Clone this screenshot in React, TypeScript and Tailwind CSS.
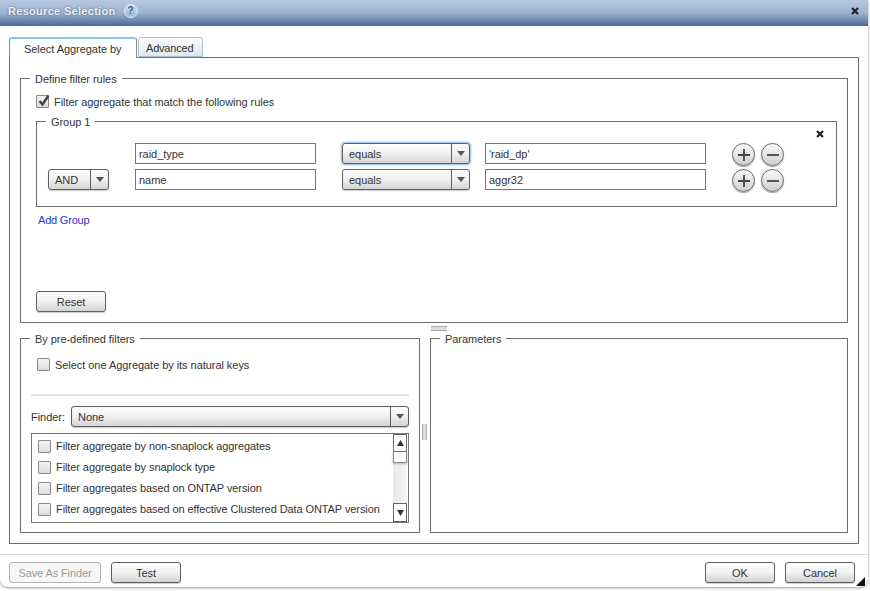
import React from "react"

const btnClass =
  "flex h-[21px] w-[70px] items-center justify-center rounded-[3px] border border-[#5f5f5f] bg-gradient-to-b from-[#fdfdfd] via-[#f2f2f2] to-[#d2d2d2] pt-[1px] text-[#333] shadow-[0_1px_1px_#ccc]"

function Checkbox({ checked = false }: { checked?: boolean }) {
  return (
    <span className="relative block h-[13px] w-[13px] shrink-0 rounded-[1px] border border-[#8a8a8a] bg-gradient-to-b from-[#f4f4f4] to-[#dcdcdc]">
      {checked && (
        <svg className="absolute left-[0px] top-[-3px]" width="14" height="15" viewBox="0 0 14 15">
          <path d="M2.5 8 L5.5 11.5 L11.5 2.5" fill="none" stroke="#444" strokeWidth="2.4" />
        </svg>
      )}
    </span>
  )
}

function Arrow() {
  return (
    <svg width="8" height="5" viewBox="0 0 8 5">
      <path d="M0 0 H8 L4 5 Z" fill="#555" />
    </svg>
  )
}

function CloseIcon() {
  return (
    <svg width="8" height="8" viewBox="0 0 8 8">
      <path d="M1 1 L7 7 M7 1 L1 7" stroke="#222" strokeWidth="2.2" />
    </svg>
  )
}

function Select({ label, width, focus = false }: { label: string; width: string; focus?: boolean }) {
  return (
    <div
      className={`flex h-[21px] shrink-0 items-center rounded-[3px] border border-[#5f5f5f] bg-gradient-to-b from-[#fdfdfd] via-[#f0f0f0] to-[#d4d4d4] text-[#333] ${width} ${
        focus ? "shadow-[0_0_2px_1px_#8db8e8]" : "shadow-[0_1px_1px_#ccc]"
      }`}
    >
      <span className="flex-1 pl-[6px] pt-[1px]">{label}</span>
      <span className="flex h-full w-[18px] items-center justify-center border-l border-[#5f5f5f]">
        <Arrow />
      </span>
    </div>
  )
}

function TextInput({ value, width }: { value: string; width: string }) {
  return (
    <div className={`flex h-[21px] shrink-0 items-center border border-[#777] bg-white pl-[3px] pt-[1px] text-[#333] ${width}`}>
      {value}
    </div>
  )
}

function RoundButton({ kind }: { kind: "plus" | "minus" }) {
  return (
    <span className="flex h-[23px] w-[23px] shrink-0 items-center justify-center rounded-full border border-[#666] bg-gradient-to-b from-[#fafafa] to-[#cfcfcf] shadow-[0_1px_1px_#aaa]">
      <svg width="12" height="12" viewBox="0 0 12 12">
        <path d={kind === "plus" ? "M0 6 H12 M6 0 V12" : "M0 6 H12"} stroke="#444" strokeWidth="1.8" />
      </svg>
    </span>
  )
}

function RuleRow({ field, value, first }: { field: string; value: string; first?: boolean }) {
  return (
    <div className="flex h-[20px] items-start pl-[11px]">
      <div className="w-[61px] shrink-0">
        {!first && <Select label="AND" width="w-[61px]" />}
      </div>
      <div className="ml-[26px]">
        <TextInput value={field} width="w-[181px]" />
      </div>
      <div className="ml-[26px]">
        <Select label="equals" width="w-[128px]" focus={first} />
      </div>
      <div className="ml-[15px]">
        <TextInput value={value} width="w-[221px]" />
      </div>
      <div className="ml-[26px] flex gap-[6px]">
        <RoundButton kind="plus" />
        <RoundButton kind="minus" />
      </div>
    </div>
  )
}

const filters = [
  "Filter aggregate by non-snaplock aggregates",
  "Filter aggregate by snaplock type",
  "Filter aggregates based on ONTAP version",
  "Filter aggregates based on effective Clustered Data ONTAP version",
]

function FilterList() {
  return (
    <div className="ml-[10px] mt-[6px] flex h-[90px] w-[378px] border border-[#777] bg-white">
      <div className="flex-1 pl-[6px] pt-[2px]">
        {filters.map((f) => (
          <div key={f} className="flex h-[21px] items-center gap-[5px]">
            <Checkbox />
            <span className="tracking-[-0.09px] text-[#333]">{f}</span>
          </div>
        ))}
      </div>
      <div className="mr-[1px] flex w-[14px] flex-col bg-gradient-to-r from-[#e8e8e8] to-[#f6f6f6]">
        <span className="flex h-[18px] items-center justify-center border border-[#666] bg-white">
          <svg width="7" height="6" viewBox="0 0 7 6"><path d="M3.5 0 L7 6 H0 Z" fill="#333" /></svg>
        </span>
        <span className="h-[11px] border-x border-b border-[#888] bg-white shadow-[0_1px_2px_#bbb]" />
        <span className="flex-1" />
        <span className="flex h-[19px] items-center justify-center border border-[#666] bg-white">
          <svg width="7" height="6" viewBox="0 0 7 6"><path d="M3.5 6 L7 0 H0 Z" fill="#333" /></svg>
        </span>
      </div>
    </div>
  )
}

function Legend({ text }: { text: string }) {
  return <legend className="ml-[9px] h-[14px] px-[5px] pt-[1px] leading-[14px] text-[#333]">{text}</legend>
}

export default function App() {
  return (
    <div className="h-[591px] w-[870px] overflow-hidden bg-white font-['Liberation_Sans',Arial,sans-serif] text-[11px] tracking-[-0.05px]">
      <div className="relative flex h-[587px] w-[868px] flex-col rounded-b-[8px] bg-white shadow-[0_1px_3px_#999]">
        {/* title bar */}
        <div className="flex h-[26px] shrink-0 items-center bg-gradient-to-b from-[#b8cae1] via-[#9db2cf] to-[#4d6b96] pb-[4px] pl-[8px] pr-[9px]">
          <span className="font-bold tracking-[0.3px] text-[#eef1f6] [text-shadow:0_0_2px_#3c5070]">Resource Selection</span>
          <span className="ml-[8px] flex h-[14px] w-[14px] items-center justify-center rounded-full border border-[#dfe9f4] bg-gradient-to-b from-[#cfe3f5] to-[#8fb8dc] text-[10px] font-bold leading-none text-[#3c5a86]">
            ?
          </span>
          <span className="ml-auto">
            <CloseIcon />
          </span>
        </div>

        {/* tabs */}
        <div className="relative z-10 ml-[9px] mt-[11px] flex h-[21px] shrink-0">
          <div className="flex h-[21px] w-[128px] items-center rounded-t-[3px] border-x border-t-2 border-[#888] border-t-[#8fc4ea] bg-white pl-[14px] pt-[1px] text-[#333]">
            Select Aggregate by
          </div>
          <div className="ml-[1px] flex h-[20px] w-[65px] items-center rounded-t-[3px] border border-[#a9c0cf] bg-gradient-to-b from-[#fdfdfd] to-[#dfe8ee] pl-[7px] pt-[2px] tracking-[-0.2px] text-[#333]">
            Advanced
          </div>
        </div>

        {/* tab panel */}
        <div className="-mt-px ml-[9px] h-[487px] w-[850px] shrink-0 border border-[#6e6e6e] pl-[10px]">
          <fieldset className="mt-[13px] h-[252px] w-[828px] border border-[#6e6e6e]">
            <Legend text="Define filter rules" />
            <div className="ml-[15px] mt-[9px] flex h-[14px] items-center gap-[5px] text-[#333]">
              <Checkbox checked />
              <span className="pt-[3px]">Filter aggregate that match the following rules</span>
            </div>
            <fieldset className="ml-[15px] mt-[6px] h-[93px] w-[801px] border border-[#6e6e6e]">
              <Legend text="Group 1" />
              <div className="mt-[2px] flex h-[8px] justify-end pr-[12px]">
                <CloseIcon />
              </div>
              <div className="mt-[5px] flex flex-col gap-[6px]">
                <RuleRow field="raid_type" value="'raid_dp'" first />
                <RuleRow field="name" value="aggr32" />
              </div>
            </fieldset>
            <div className="ml-[17px] mt-[6px] h-[14px] leading-[14px] tracking-[-0.2px] text-[#2a35d8]">Add Group</div>
            <button className={`${btnClass} ml-[15px] mt-[64px]`}>Reset</button>
          </fieldset>

          {/* horizontal splitter */}
          <div className="flex h-[8px] justify-center pr-[1px] pt-[3px]">
            <span className="h-[5px] w-[16px] border-y border-[#aaa] bg-[#ddd]" />
          </div>

          <div className="flex h-[202px] w-[828px]">
            <fieldset className="h-[202px] w-[400px] shrink-0 border border-[#6e6e6e]">
              <Legend text="By pre-defined filters" />
              <div className="ml-[16px] mt-[13px] flex h-[13px] items-center gap-[5px] text-[#333]">
                <Checkbox />
                <span className="pt-[2px]">Select one Aggregate by its natural keys</span>
              </div>
              <div className="ml-[10px] mt-[23px] h-[2px] w-[378px] bg-[#dfe5e5]" />
              <div className="ml-[10px] mt-[10px] flex items-center gap-[7px] text-[#333]">
                <span className="w-[33px] pt-[1px]">Finder:</span>
                <Select label="None" width="w-[338px]" />
              </div>
              <FilterList />
            </fieldset>

            {/* vertical splitter */}
            <div className="flex w-[10px] shrink-0 items-center justify-center pr-[1px]">
              <span className="h-[16px] w-[5px] border-x border-[#aaa] bg-[#ddd]" />
            </div>

            <fieldset className="h-[202px] w-[418px] border border-[#6e6e6e]">
              <Legend text="Parameters" />
            </fieldset>
          </div>
        </div>

        {/* footer */}
        <div className="mt-[10px] flex flex-1 items-start border-t border-[#d8d8d8] pl-[9px] pr-[13px] pt-[7px]">
          <button className="flex h-[21px] w-[92px] items-center justify-center rounded-[3px] border border-[#b4b4b4] bg-[#f7f7f7] pt-[1px] tracking-[-0.1px] text-[#9a9a9a]">
            Save As Finder
          </button>
          <button className={`${btnClass} ml-[10px]`}>Test</button>
          <button className={`${btnClass} ml-auto`}>OK</button>
          <button className={`${btnClass} ml-[10px]`}>Cancel</button>
        </div>

        {/* resize grip */}
        <svg className="absolute bottom-[1px] right-[3px]" width="9" height="9" viewBox="0 0 9 9">
          <path d="M9 0 V9 H0 Z" fill="#111" />
        </svg>
      </div>
    </div>
  )
}
